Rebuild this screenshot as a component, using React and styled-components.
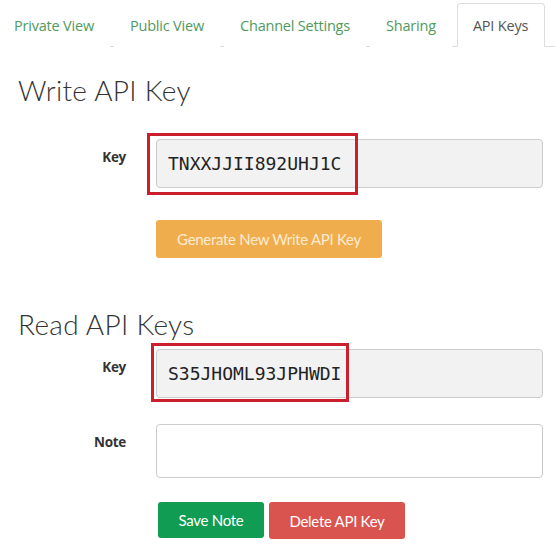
import React from "react";
import styled, { createGlobalStyle } from "styled-components";

const Global = createGlobalStyle`
  html, body { margin: 0; padding: 0; background: #fff; }
  body { font-family: "Lato", "Liberation Sans", sans-serif; color: #333; }
  * { box-sizing: border-box; }
`;

const Page = styled.div`
  width: 555px;
  height: 551px;
  overflow: hidden;
  background: #fff;
`;

const Tabs = styled.nav`
  display: flex;
  align-items: flex-end;
  height: 47px;
  border-bottom: 1px solid #ddd;
  gap: 4px;
`;

const Tab = styled.div`
  flex-shrink: 0;
  white-space: nowrap;
  height: 44px;
  margin-bottom: -1px;
  padding: 0 15px;
  display: flex;
  align-items: center;
  font-family: "Open Sans", "Noto Sans", sans-serif;
  font-size: 14.5px;
  letter-spacing: -0.2px;
  color: ${(p) => (p.$active ? "#555" : "#4f9a5d")};
  background: #fff;
  border: 1px solid ${(p) => (p.$active ? "#ddd" : "transparent")};
  border-bottom-color: ${(p) => (p.$active ? "#fff" : "transparent")};
  border-radius: 4px 4px 0 0;
  &:first-child { padding-left: 13px; }
  &:last-child { margin-left: 1px; padding: 0 16px 0 15px; }
`;

const Section = styled.section`
  padding: 0 12px 0 18px;
`;

const Heading = styled.h2`
  margin: ${(p) => p.$mt}px 0 0 0;
  font-family: "Lato", sans-serif;
  font-weight: 300;
  font-size: 28px;
  line-height: 30px;
  color: #333;
  letter-spacing: 0.3px;
`;

const Row = styled.div`
  display: grid;
  grid-template-columns: 108px 387px;
  column-gap: 30px;
  margin-top: ${(p) => p.$mt}px;
`;

const Label = styled.div`
  text-align: right;
  font-family: "Open Sans", sans-serif;
  font-weight: 700;
  font-size: 13.5px;
  line-height: 20px;
  padding-top: 8px;
  color: #333;
  letter-spacing: -0.3px;
`;

const Field = styled.div`
  position: relative;
`;

const KeyInput = styled.div`
  height: 49px;
  background: #f2f2f2;
  border: 1px solid #ccc;
  border-radius: 4px;
  display: flex;
  align-items: center;
  padding-left: 11px;
  font-family: "DejaVu Sans Mono", "Liberation Mono", monospace;
  font-size: 18px;
  color: #222;
`;

const TextArea = styled.div`
  height: 54px;
  background: #fff;
  border: 1px solid #ccc;
  border-radius: 4px;
`;

const Highlight = styled.div`
  position: absolute;
  left: ${(p) => p.$l}px;
  top: ${(p) => p.$t}px;
  width: ${(p) => p.$w}px;
  height: ${(p) => p.$h}px;
  border: 3px solid #cc1f2e;
  pointer-events: none;
`;

const Buttons = styled.div`
  display: flex;
  gap: 5px;
  align-items: flex-start;
`;

const Button = styled.div`
  height: ${(p) => p.$h || 36}px;
  width: ${(p) => p.$w}px;
  margin-left: ${(p) => p.$ml || 0}px;
  border-radius: 3px;
  background: ${(p) => p.$bg};
  color: ${(p) => p.$fg || "#fff"};
  display: flex;
  align-items: center;
  justify-content: center;
  font-family: "Lato", sans-serif;
  font-size: 15px;
  letter-spacing: -0.3px;
`;

export default function App() {
  return (
    <Page>
      <Global />
      <Tabs>
        <Tab>Private View</Tab>
        <Tab>Public View</Tab>
        <Tab>Channel Settings</Tab>
        <Tab>Sharing</Tab>
        <Tab $active>API Keys</Tab>
      </Tabs>
      <Section>
        <Heading $mt={28}>Write API Key</Heading>
        <Row $mt={34}>
          <Label>Key</Label>
          <Field>
            <KeyInput>TNXXJJII892UHJ1C</KeyInput>
            <Highlight $l={-9} $t={-6} $w={211} $h={62} />
          </Field>
        </Row>
        <Row $mt={32}>
          <div />
          <Button $bg="#f0ad4e" $fg="#fdebd0" $w={226} $h={38}>
            Generate New Write API Key
          </Button>
        </Row>
        <Heading $mt={51}>Read API Keys</Heading>
        <Row $mt={10}>
          <Label>Key</Label>
          <Field>
            <KeyInput>S35JHOML93JPHWDI</KeyInput>
            <Highlight $l={-5} $t={-6} $w={198} $h={59} />
          </Field>
        </Row>
        <Row $mt={26}>
          <Label>Note</Label>
          <TextArea />
        </Row>
        <Row $mt={24}>
          <div />
          <Buttons>
            <Button $bg="#109c52" $w={106} $ml={2}>Save Note</Button>
            <Button $bg="#d9534f" $w={136} $h={37}>Delete API Key</Button>
          </Buttons>
        </Row>
      </Section>
    </Page>
  );
}
